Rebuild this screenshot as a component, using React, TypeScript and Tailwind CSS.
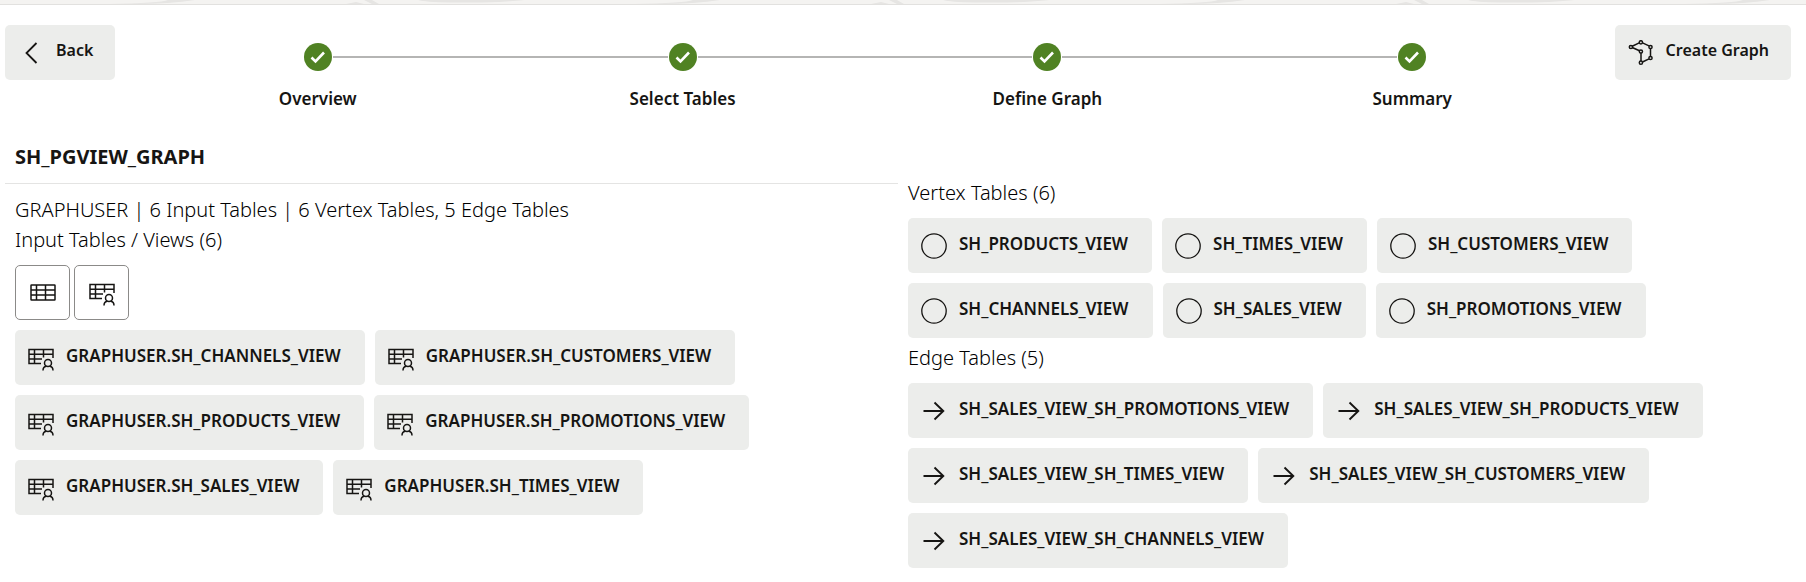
import type { ReactNode } from "react";

function TableIcon() {
  return (
    <svg width="26" height="26" viewBox="0 0 26 26" fill="none" stroke="#161513" strokeWidth="1.5" aria-hidden="true">
      <rect x="1" y="5" width="24" height="15" rx="0.5" />
      <path d="M1 10h24M1 15h24M6.500 5v15M15.500 5v15" />
    </svg>
  );
}

function ViewIcon() {
  return (
    <svg width="26" height="26" viewBox="0 0 26 26" fill="none" stroke="#161513" strokeWidth="1.5" aria-hidden="true">
      <path d="M13 18.500H1v-14h24v8.500M1 9.200h24M1 14h13M6.500 4.500v14M15.500 4.500v8" />
      <circle cx="20" cy="18" r="3.500" />
      <path d="M15 25.500c0-2.500 1.500-4 3.200-4.300M25 25.500c0-2.500-1.500-4-3.200-4.300" />
    </svg>
  );
}

function CircleIcon() {
  return (
    <svg width="26" height="26" viewBox="0 0 26 26" fill="none" stroke="#161513" strokeWidth="1.3" aria-hidden="true">
      <circle cx="13" cy="13" r="12.2" />
    </svg>
  );
}

function ArrowIcon() {
  return (
    <svg width="26" height="26" viewBox="0 0 26 26" fill="none" stroke="#161513" strokeWidth="1.9" aria-hidden="true">
      <path d="M2.500 13h20M13.500 4.500l8.800 8.500-8.800 8.500" />
    </svg>
  );
}

function BackIcon() {
  return (
    <svg width="26" height="26" viewBox="0 0 26 26" fill="none" stroke="#161513" strokeWidth="1.8" aria-hidden="true">
      <path d="M18.500 3L8.500 13l10 10" />
    </svg>
  );
}

function GraphIcon() {
  return (
    <svg width="26" height="26" viewBox="0 0 26 26" fill="none" stroke="#161513" strokeWidth="1.5" aria-hidden="true">
      <path d="M4.200 6.200l7-3.300M14.500 2.900l6.500 3M22.500 8.200v8M21 18.800l-6.500 3.200M13 21v-8.200M11.500 10.800L4.200 7.500" />
      <circle cx="2.900" cy="7" r="1.600" />
      <circle cx="12.900" cy="2.300" r="1.600" />
      <circle cx="22.500" cy="7" r="1.600" />
      <circle cx="12.900" cy="11.500" r="1.600" />
      <circle cx="22.500" cy="18" r="1.600" />
      <circle cx="12.900" cy="22.700" r="1.600" />
    </svg>
  );
}

const buttonBase = "flex h-[55px] items-center gap-3 rounded-[5px] bg-[#ecedeb] pl-[13px] font-semibold whitespace-nowrap";

function Chip({ icon, children }: { icon: ReactNode; children: ReactNode }) {
  return (
    <button type="button" className={`${buttonBase} pr-6 text-[17px]`}>
      {icon}
      <span className="pb-1">{children}</span>
    </button>
  );
}

function ActionButton({ icon, children }: { icon: ReactNode; children: ReactNode }) {
  return (
    <button type="button" className={`${buttonBase} pr-[22px] text-base`}>
      {icon}
      <span className="pb-1.5">{children}</span>
    </button>
  );
}

const steps = ["Overview", "Select Tables", "Define Graph", "Summary"];
const inputViews = ["CHANNELS", "CUSTOMERS", "PRODUCTS", "PROMOTIONS", "SALES", "TIMES"];
const vertexTables = ["PRODUCTS", "TIMES", "CUSTOMERS", "CHANNELS", "SALES", "PROMOTIONS"];
const edgeTables = ["PROMOTIONS", "PRODUCTS", "TIMES", "CUSTOMERS", "CHANNELS"];

function MarbledStrip() {
  return (
    <div className="h-[5px] border-b border-[#e2e1df] bg-[#f4f3f1]">
      <svg className="block h-1 w-full" aria-hidden="true">
        <defs>
          <pattern id="marble" width="525" height="4" patternUnits="userSpaceOnUse">
            <path d="M108 4Q160 3 168 0H195Q170 4 135 4z" fill="#e6e5e3" />
            <path d="M346 4l10-2 8 2zM364 0h8l7 4h-7z" fill="#e6e5e3" />
            <path d="M418 0H525Q500 3 450 2.500Q425 2 418 0z" fill="#e6e5e3" />
          </pattern>
        </defs>
        <rect width="100%" height="4" fill="url(#marble)" />
      </svg>
    </div>
  );
}

function Stepper() {
  return (
    <ol className="grid flex-1 grid-cols-4 pt-[18px]">
      {steps.map((label, i) => (
        <li key={label} className="flex flex-col items-center gap-4">
          <div className="flex w-full items-center gap-px">
            <span className={i > 0 ? "h-0.5 flex-1 bg-[#b5b5b4]" : "h-0.5 flex-1"} />
            <svg width="28" height="28" viewBox="0 0 28 28" aria-hidden="true">
              <circle cx="14" cy="14" r="14" fill="#508223" />
              <path d="M7.500 14.500l4 4 8.500-9" fill="none" stroke="#fff" strokeWidth="2.600" />
            </svg>
            <span className={i < 3 ? "h-0.5 flex-1 bg-[#b5b5b4]" : "h-0.5 flex-1"} />
          </div>
          <span className="text-[17px] leading-6 font-semibold">{label}</span>
        </li>
      ))}
    </ol>
  );
}

export default function App() {
  return (
    <div className="bg-white font-['Noto_Sans',sans-serif] text-[#161513]">
      <MarbledStrip />
      <header className="flex items-start gap-5 pt-5 pr-[15px] pl-[5px]">
        <ActionButton icon={<BackIcon />}>Back</ActionButton>
        <Stepper />
        <ActionButton icon={<GraphIcon />}>Create Graph</ActionButton>
      </header>
      <main className="grid grid-cols-2 gap-x-2.5 px-[5px] pt-[26px]">
        <section>
          <h1 className="border-b border-[#e4e4e3] px-2.5 pt-[5px] pb-[11px] text-xl leading-[30px] font-bold">SH_PGVIEW_GRAPH</h1>
          <div className="px-2.5 pt-[11px]">
            <p className="text-xl leading-[30px] font-light text-black">GRAPHUSER | 6 Input Tables | 6 Vertex Tables, 5 Edge Tables</p>
            <h2 className="text-xl leading-[30px] font-light text-black">Input Tables / Views (6)</h2>
            <div className="flex gap-1 pt-2.5 pb-2.5">
              <button type="button" aria-label="Tables" className="flex size-[55px] items-center justify-center rounded-[5px] border border-[#8b8a88]">
                <TableIcon />
              </button>
              <button type="button" aria-label="Views" className="flex size-[55px] items-center justify-center rounded-[5px] border border-[#8b8a88]">
                <ViewIcon />
              </button>
            </div>
            <div className="flex flex-wrap gap-2.5">
              {inputViews.map((name) => (
                <Chip key={name} icon={<ViewIcon />}>{`GRAPHUSER.SH_${name}_VIEW`}</Chip>
              ))}
            </div>
          </div>
        </section>
        <section className="pt-[41px]">
          <h2 className="pb-2.5 text-xl leading-[30px] font-light text-black">Vertex Tables (6)</h2>
          <div className="flex flex-wrap gap-2.5">
            {vertexTables.map((name) => (
              <Chip key={name} icon={<CircleIcon />}>{`SH_${name}_VIEW`}</Chip>
            ))}
          </div>
          <h2 className="pt-[5px] pb-2.5 text-xl leading-[30px] font-light text-black">Edge Tables (5)</h2>
          <div className="flex flex-wrap gap-2.5">
            {edgeTables.map((name) => (
              <Chip key={name} icon={<ArrowIcon />}>{`SH_SALES_VIEW_SH_${name}_VIEW`}</Chip>
            ))}
          </div>
        </section>
      </main>
    </div>
  );
}
